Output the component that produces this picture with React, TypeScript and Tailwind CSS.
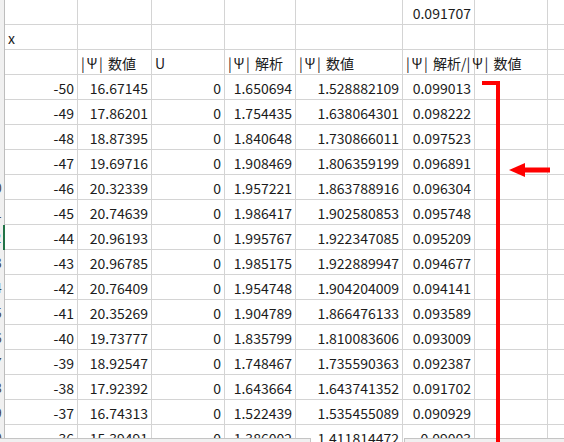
import React from 'react';

type Row = {
  num: number;
  cells: React.ReactNode[];
  kind?: 'head';
};

const widths = ['w-[73px]', 'w-[74px]', 'w-[73px]', 'w-[71px]', 'w-[107px]', 'w-[72px]', 'w-[73px]', 'w-[40px]'];

// |Ψ| in the sheet font: full-width psi between two bars
function Psi() {
  return (
    <span className="inline-flex items-center">
      <span className="w-[4px]">|</span>
      <span className="w-[14px] text-center">Ψ</span>
      <span className="w-[9px]">|</span>
    </span>
  );
}

function Head({ children }: { children: React.ReactNode }) {
  return <span className="inline-flex items-center whitespace-nowrap">{children}</span>;
}

const data: string[][] = [
  ['-50', '16.67145', '0', '1.650694', '1.528882109', '0.099013'],
  ['-49', '17.86201', '0', '1.754435', '1.638064301', '0.098222'],
  ['-48', '18.87395', '0', '1.840648', '1.730866011', '0.097523'],
  ['-47', '19.69716', '0', '1.908469', '1.806359199', '0.096891'],
  ['-46', '20.32339', '0', '1.957221', '1.863788916', '0.096304'],
  ['-45', '20.74639', '0', '1.986417', '1.902580853', '0.095748'],
  ['-44', '20.96193', '0', '1.995767', '1.922347085', '0.095209'],
  ['-43', '20.96785', '0', '1.985175', '1.922889947', '0.094677'],
  ['-42', '20.76409', '0', '1.954748', '1.904204009', '0.094141'],
  ['-41', '20.35269', '0', '1.904789', '1.866476133', '0.093589'],
  ['-40', '19.73777', '0', '1.835799', '1.810083606', '0.093009'],
  ['-39', '18.92547', '0', '1.748467', '1.735590363', '0.092387'],
  ['-38', '17.92392', '0', '1.643664', '1.643741352', '0.091702'],
  ['-37', '16.74313', '0', '1.522439', '1.535455089', '0.090929'],
  ['-36', '15.39491', '0', '1.386002', '1.411814472', '0.09003'],
];

const rows: Row[] = [
  { num: 3, cells: [null, null, null, null, null, '0.091707', null, null] },
  { num: 4, cells: ['x', null, null, null, null, null, null, null], kind: 'head' },
  {
    num: 5,
    cells: [
      null,
      <Head><Psi />数値</Head>,
      'U',
      <Head><Psi />解析</Head>,
      <Head><Psi />数値</Head>,
      <Head><Psi />解析/<Psi />数値</Head>,
      null,
      null,
    ],
    kind: 'head',
  },
  ...data.map((d, i) => ({ num: 6 + i, cells: [...d, null, null] })),
];

function RowHeader({ num, selected }: { num: number; selected: boolean }) {
  return (
    <div className="w-[5px] h-full overflow-hidden shrink-0">
      <div
        className={`w-[20px] ml-[-15px] h-full flex items-center justify-center border-r bg-[#f0f0f0] text-[13px] ${
          selected ? 'border-[#217346] border-r-2 text-[#217346]' : 'border-[#bdbdbd] text-[#444444]'
        }`}
      >
        {num}
      </div>
    </div>
  );
}

export default function App() {
  return (
    <div className="relative w-[564px] h-[442px] overflow-hidden bg-white text-[#1b1b1b] font-['Noto_Sans_CJK_JP',sans-serif] text-[14px] leading-none">
      <div className="flex flex-col">
        {rows.map((row) => (
          <div key={row.num} className="flex h-[25px] shrink-0">
            <RowHeader num={row.num} selected={row.num === 12} />
            {widths.map((w, ci) => {
              const v = row.cells[ci];
              const left = row.kind === 'head';
              // header text in F spills over into the empty G cell
              const spill = row.num === 5 && ci === 5;
              return (
                <div
                  key={ci}
                  className={`${w} shrink-0 h-full border-r border-b border-[#d4d4d4] flex items-center pt-[1px] whitespace-nowrap ${
                    spill ? 'overflow-visible relative z-10' : 'overflow-hidden'
                  } ${left ? 'justify-start pl-[3px]' : 'justify-end pr-[3px]'} ${ci === 7 ? 'grow' : ''}`}
                >
                  {v}
                </div>
              );
            })}
          </div>
        ))}
      </div>

      {/* bottom bars */}
      <div className="absolute left-0 bottom-0 w-[311px] h-[4px] bg-[#f0f0f0] border-t border-r border-[#c4c4c4]" />
      <div className="absolute left-[404px] right-0 bottom-0 h-[4px] bg-[#f0f0f0] border-t border-l border-[#c4c4c4]" />

      {/* red bracket */}
      <div className="absolute left-[482px] top-[81px] w-[18px] h-[4px] bg-[#ff0000]" />
      <div className="absolute left-[496px] top-[81px] w-[4px] h-[361px] bg-[#ff0000]" />

      {/* arrow */}
      <svg className="absolute left-[508px] top-[162px]" width="44" height="16" viewBox="0 0 44 16">
        <polygon points="1,8 17,1 17,15" fill="#ff0000" />
        <rect x="16" y="5.5" width="26" height="5" fill="#ff0000" />
      </svg>
    </div>
  );
}
